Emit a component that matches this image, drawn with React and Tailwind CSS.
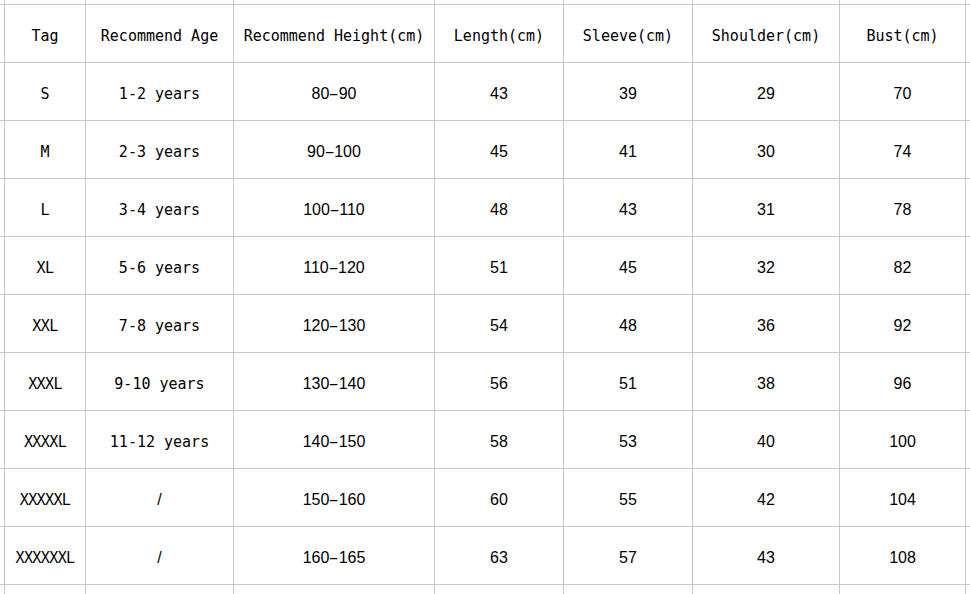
import React from "react";

const MONO = "font-['DejaVu_Sans_Mono',monospace] text-[15px]";
const TAGF = "font-['DejaVu_Sans_Mono',monospace] text-[15px] tracking-[-0.6px]";
const SANS = "font-['Liberation_Sans',Arial,sans-serif] text-[16px]";

const headers = [
  "Tag",
  "Recommend Age",
  "Recommend Height(cm)",
  "Length(cm)",
  "Sleeve(cm)",
  "Shoulder(cm)",
  "Bust(cm)",
];

const rows = [
  ["S", "1-2 years", "80-90", "43", "39", "29", "70"],
  ["M", "2-3 years", "90-100", "45", "41", "30", "74"],
  ["L", "3-4 years", "100-110", "48", "43", "31", "78"],
  ["XL", "5-6 years", "110-120", "51", "45", "32", "82"],
  ["XXL", "7-8 years", "120-130", "54", "48", "36", "92"],
  ["XXXL", "9-10 years", "130-140", "56", "51", "38", "96"],
  ["XXXXL", "11-12 years", "140-150", "58", "53", "40", "100"],
  ["XXXXXL", "/", "150-160", "60", "55", "42", "104"],
  ["XXXXXXL", "/", "160-165", "63", "57", "43", "108"],
];

function Range({ text }) {
  const [a, b] = text.split("-");
  return (
    <span className="whitespace-nowrap">
      {a}
      <span className="inline-block scale-x-[1.9] mx-[2px]">-</span>
      {b}
    </span>
  );
}

function Blank() {
  return <div className="bg-white" />;
}

function Cell({ children, font }) {
  return (
    <div
      className={`bg-white flex items-center justify-center pt-[5px] text-black whitespace-nowrap ${font}`}
    >
      {children}
    </div>
  );
}

export default function App() {
  const cells = [];
  for (let i = 0; i < 9; i++) cells.push(<Blank key={`t${i}`} />);
  cells.push(<Blank key="hl" />);
  headers.forEach((h, i) =>
    cells.push(
      <Cell key={`h${i}`} font={MONO}>
        {h}
      </Cell>
    )
  );
  cells.push(<Blank key="hr" />);
  rows.forEach((r, ri) => {
    cells.push(<Blank key={`l${ri}`} />);
    r.forEach((v, ci) => {
      let font = SANS;
      let content = v;
      if (ci === 0) {
        font = v.length <= 1 ? MONO : TAGF;
      } else if (ci === 1) {
        font = v === "/" ? SANS : MONO;
      } else if (ci === 2) {
        content = <Range text={v} />;
      }
      cells.push(
        <Cell key={`c${ri}-${ci}`} font={font}>
          {content}
        </Cell>
      );
    });
    cells.push(<Blank key={`r${ri}`} />);
  });
  for (let i = 0; i < 9; i++) cells.push(<Blank key={`b${i}`} />);

  return (
    <div className="w-[970px] h-[594px] overflow-hidden bg-white">
      <div className="grid w-[970px] h-[594px] gap-px bg-[#c6c6d8] grid-cols-[4px_80px_147px_200px_128px_128px_146px_125px_1fr] grid-rows-[4px_repeat(10,57px)_1fr]">
        {cells}
      </div>
    </div>
  );
}
